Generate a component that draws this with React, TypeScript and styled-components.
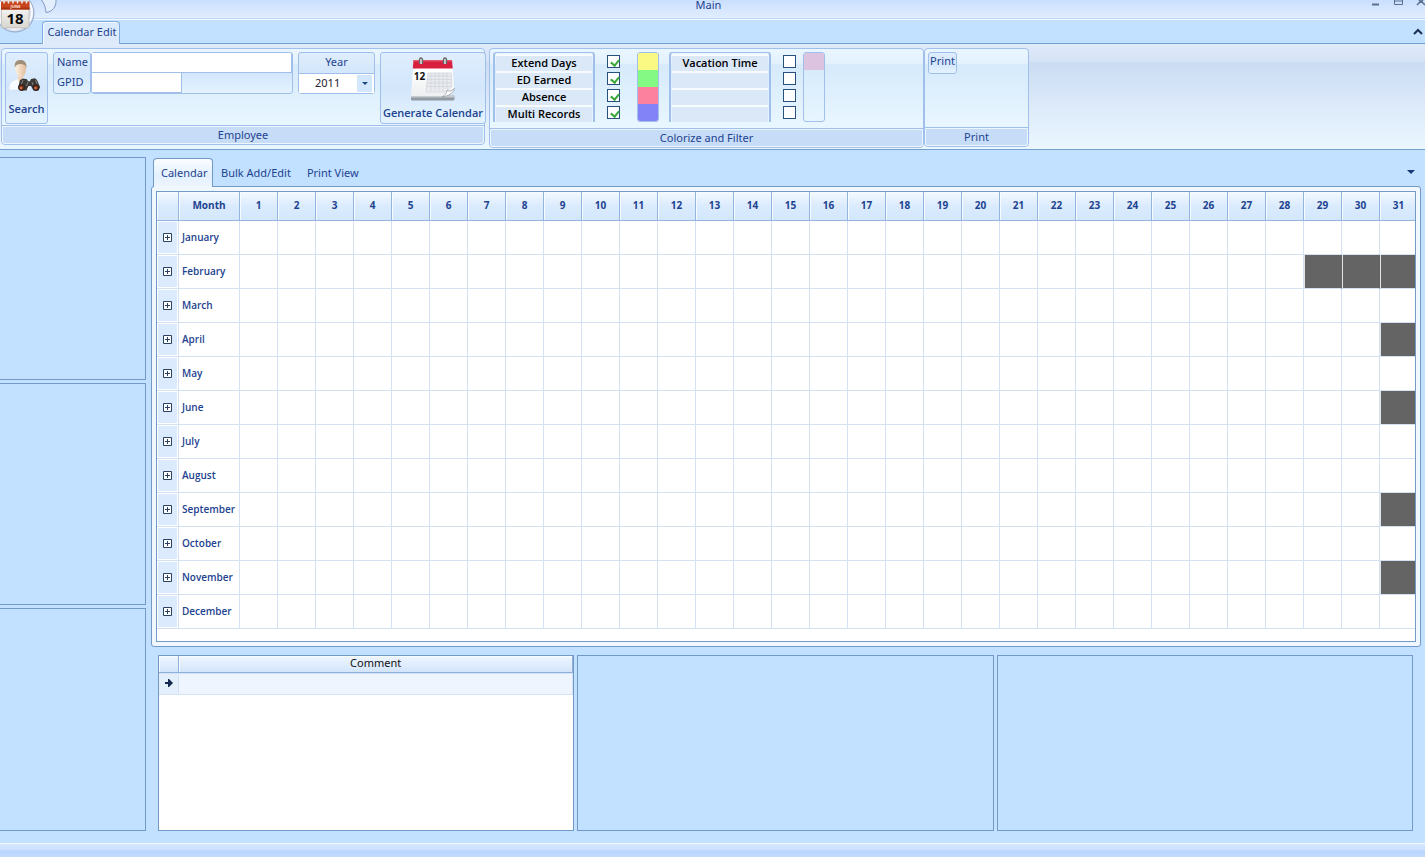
import React from "react";
import styled, { createGlobalStyle, css } from "styled-components";

const ink = "#1d4390";
const line = "#a0bfea";
const edge = "#7399c8";
const sky = "#c2e0ff";
const boldFont = '"Open Sans", "Noto Sans", sans-serif';

const GlobalStyle = createGlobalStyle`
  * { box-sizing: border-box; }
  body {
    margin: 0;
    background: ${sky};
    color: ${ink};
    font: 11px/16px "Noto Sans", "Open Sans", sans-serif;
  }
  button, input, select { font: inherit; color: inherit; margin: 0; }
`;

const Window = styled.div`
  display: flex;
  flex-direction: column;
  min-height: 100vh;
  overflow: hidden;
  background: ${sky};
`;

/* Title bar */
const TitleBar = styled.header`
  position: relative;
  display: flex;
  justify-content: center;
  height: 20px;
  padding-right: 8px;
  background: linear-gradient(#cadffe, #e2eefe);
  border-bottom: 1px solid #f4faff;
  box-shadow: inset 0 -1px 0 #bcd6f5;
`;
const Title = styled.h1`
  margin: 0;
  height: 10px;
  font-size: 11px;
  line-height: 10px;
  font-weight: 400;
`;
const AppButton = styled.button`
  position: absolute;
  z-index: 2;
  left: 0;
  top: 0;
  width: 60px;
  height: 34px;
  padding: 0;
  border: 0;
  background: none;
  svg { display: block; }
`;
const WindowControls = styled.div`
  position: absolute;
  right: 0;
  top: 0;
  display: flex;
`;
const WindowControl = styled.button`
  width: 23px;
  height: 10px;
  padding: 0;
  border: 0;
  background: none;
  &:last-child { width: 10px; }
  svg { display: block; }
`;

/* Ribbon */
const RibbonTabs = styled.div`
  display: flex;
  align-items: flex-end;
  justify-content: space-between;
  height: 24px;
  padding: 0 1px 0 42px;
  border-bottom: 1px solid #6fa0d2;
`;
const RibbonTab = styled.button`
  height: 23px;
  margin-bottom: -1px;
  padding: 0 0 2px 2px;
  border: 1px solid #7fabdf;
  border-bottom: 0;
  border-radius: 4px 4px 0 0;
  box-shadow: inset 1px 1px 0 #f2f9ff;
  width: 78px;
  white-space: nowrap;
  background: linear-gradient(#d8eaff, #dfeafa);
`;
const Collapse = styled.button`
  width: 12px;
  height: 22px;
  padding: 0;
  border: 0;
  background: none;
`;
const Ribbon = styled.section`
  display: flex;
  align-items: flex-start;
  height: 106px;
  padding: 4px 0 0 1px;
  border-bottom: 1px solid #74a0cf;
  background: linear-gradient(#dfeafa 0, #d6e4f6 17px, #cbdcf3 19px, #dceafa 62px, #eaf7ff 105px);
`;
const Group = styled.section<{ $w: number; $body: number; $gap?: number }>`
  display: flex;
  flex-direction: column;
  flex: none;
  width: ${(p) => p.$w}px;
  margin-right: ${(p) => p.$gap ?? 0}px;
  border: 1px solid ${line};
  border-radius: 4px;
  > div { height: ${(p) => p.$body}px; }
`;
const GroupBody = styled.div`
  display: flex;
  align-items: flex-start;
  padding: 3px 0 0 3px;
  border-radius: 4px 4px 0 0;
  background: linear-gradient(#eaf6ff 0, #e4f2fe 14px, #d6eafb 16px, #e8f6ff 76px);
  > * { flex: none; }
`;
const GroupName = styled.h2`
  margin: 0;
  height: 18px;
  border: 1px solid #ecf6ff;
  box-shadow: 0 -1px 0 ${line};
  border-radius: 0 0 3px 3px;
  background: #c7dcf7;
  font-size: 11px;
  line-height: 16px;
  font-weight: 400;
  text-align: center;
`;
const ribbonBox = css`
  border: 1px solid ${line};
  border-radius: 3px;
  background: linear-gradient(#dfeefd, #d3e6fb 50%, #e4f3ff);
`;
const BigButton = styled.button<{ $w: number; $gap?: number; $foot: number }>`
  ${ribbonBox}
  display: flex;
  flex-direction: column;
  align-items: center;
  justify-content: space-between;
  width: ${(p) => p.$w}px;
  height: 72px;
  margin-right: ${(p) => p.$gap ?? 0}px;
  padding: 3px 0 ${(p) => p.$foot}px;
  font-family: ${boldFont};
  font-weight: 600;
  white-space: nowrap;
`;
const FieldLabels = styled.div`
  ${ribbonBox}
  display: grid;
  grid-template-rows: 20px 20px;
  width: 38px;
  height: 42px;
  padding-left: 3px;
  line-height: 18px;
`;
const Fields = styled.div`
  ${ribbonBox}
  width: 202px;
  height: 42px;
  margin-right: 5px;
  display: flex;
  flex-direction: column;
`;
const TextBox = styled.input<{ $w: string }>`
  width: ${(p) => p.$w};
  height: 20px;
  padding: 0 3px;
  border: 0;
  border-right: 1px solid ${line};
  border-bottom: 1px solid ${line};
  background: #fff;
  outline: 0;
`;
const YearBox = styled.div`
  ${ribbonBox}
  display: flex;
  flex-direction: column;
  width: 77px;
  height: 42px;
  margin-right: 5px;
  text-align: center;
  line-height: 18px;
  label { height: 20px; }
`;
const YearPicker = styled.div`
  position: relative;
  height: 20px;
  border-top: 1px solid ${line};
  background: #fff;
  select {
    appearance: none;
    display: block;
    width: 100%;
    height: 18px;
    padding: 0 0 0 16px;
    border: 0;
    background: none;
    color: #23232f;
    outline: 0;
  }
  svg {
    position: absolute;
    right: 2px;
    top: 1px;
    pointer-events: none;
  }
`;
const Legend = styled.div`
  width: 102px;
  height: 70px;
  padding: 1px;
  border: 1px solid ${line};
  border-bottom: 0;
  border-radius: 3px 3px 0 0;
  box-shadow: inset 1px 0 0 ${line}, inset -1px 0 0 ${line};
`;
const LegendName = styled.label`
  display: block;
  height: 17px;
  margin: 0 1px;
  border-top: 2px solid #f7fbff;
  background: #dbe8f8;
  color: #000;
  font-family: ${boldFont};
  font-weight: 600;
  line-height: 14px;
  text-align: center;
`;
const Checks = styled.div<{ $gap: number }>`
  display: grid;
  grid-template-rows: repeat(4, 17px);
  padding: 3px 0 0;
  margin: 0 ${(p) => p.$gap}px 0 12px;
`;
const CheckBox = styled.input`
  appearance: none;
  position: relative;
  width: 13px;
  height: 13px;
  border: 1px solid #28507f;
  background: #fff;
  &:checked::after {
    content: "";
    position: absolute;
    left: 4px;
    top: 2px;
    width: 4px;
    height: 6px;
    border: solid #38a838;
    border-width: 0 2px 2px 0;
    transform: rotate(40deg);
  }
`;
const Swatches = styled.div<{ $gap?: number }>`
  display: grid;
  grid-template-rows: repeat(4, 17px);
  width: 22px;
  height: 70px;
  margin-right: ${(p) => p.$gap ?? 0}px;
  border: 1px solid ${line};
  border-radius: 3px;
  overflow: hidden;
`;
const Swatch = styled.span<{ $c: string }>`
  background: ${(p) => p.$c};
`;
const SmallButton = styled.button`
  ${ribbonBox}
  height: 22px;
  width: 29px;
  padding: 0;
  line-height: 16px;
  display: flex;
  justify-content: center;
`;

/* Work area */
const Work = styled.main`
  display: flex;
  flex: 1;
  padding: 7px 4px 12px 0;
`;
const Side = styled.aside`
  display: flex;
  flex-direction: column;
  gap: 3px;
  width: 146px;
  margin-right: 5px;
`;
const Panel = styled.section<{ $open?: boolean }>`
  flex: 1;
  min-width: 0;
  border: 1px solid ${edge};
  ${(p) => p.$open && "border-left: 0;"}
`;
const Main = styled.div`
  display: flex;
  flex-direction: column;
  flex: 1;
  min-width: 0;
`;
const Tabs = styled.div`
  display: flex;
  align-items: flex-end;
  height: 29px;
  padding: 0 4px 0 2px;
`;
const Tab = styled.button<{ $on?: boolean }>`
  position: relative;
  height: 28px;
  padding: 0 7px;
  border: 1px solid transparent;
  border-bottom: 0;
  border-radius: 4px 4px 0 0;
  background: none;
  white-space: nowrap;
  ${(p) =>
    p.$on &&
    css`
      z-index: 1;
      margin-bottom: -1px;
      height: 29px;
      width: 60px;
      border-color: ${edge};
      background: linear-gradient(#fafdff, #e3f0fe 60%, #eef6ff);
    `}
`;
const TabMenu = styled.button`
  width: 12px;
  height: 28px;
  margin-left: auto;
  padding: 0;
  border: 0;
  background: none;
`;
const Frame = styled.section`
  padding: 4px;
  border: 1px solid ${edge};
  border-radius: 3px;
  background: #f0f7ff;
`;
const GridBox = styled.div`
  height: 451px;
  overflow: hidden;
  border: 1px solid ${edge};
  background: #fff;
`;
const Grid = styled.table`
  width: calc(100% + 3px);
  table-layout: fixed;
  border-collapse: separate;
  border-spacing: 0;
  font-family: ${boldFont};
  font-size: 10px;
  line-height: 14px;
  col:nth-child(1) { width: 22px; }
  col:nth-child(2) { width: 61px; }
`;
const HeadCell = styled.th`
  height: 29px;
  padding: 0 0 2px;
  border-right: 1px solid #95b5de;
  border-bottom: 1px solid #95b5de;
  box-shadow: inset 1px 1px 0 #f6fbff;
  background: linear-gradient(#f3f9ff, #dbebfd 50%, #d3e7fd);
  font-weight: 700;
  text-align: center;
`;
const cellLines = css`
  height: 34px;
  padding: 0;
  border-right: 1px solid #d3e1f3;
  border-bottom: 1px solid #d3e1f3;
`;
const ExpandCell = styled.td`
  ${cellLines}
  background: #dbebfd;
  box-shadow: inset 0 0 0 1px #fff;
  text-align: center;
`;
const Expand = styled.button`
  display: block;
  width: 9px;
  height: 9px;
  margin: 0 auto;
  padding: 0;
  border: 0;
  background: none;
  svg { display: block; }
`;
const MonthCell = styled.th`
  ${cellLines}
  padding: 0 0 2px 3px;
  font-weight: 600;
  text-align: left;
`;
const DayCell = styled.td<{ $off: boolean }>`
  ${cellLines}
  ${(p) =>
    p.$off &&
    css`
      border-right-color: #646464;
      background: #646464;
      box-shadow: inset 1px 0 0 #e4e4e4;
    `}
`;

const Bottom = styled.div`
  display: flex;
  flex: 1;
  gap: 3px;
  min-height: 176px;
  margin: 8px 8px 0 7px;
`;
const CommentPanel = styled(Panel)`
  background: #fff;
`;
const CommentTable = styled.table`
  width: 100%;
  table-layout: fixed;
  border-collapse: separate;
  border-spacing: 0;
  col:first-child { width: 20px; }
  th {
    height: 17px;
    padding: 0 0 2px;
    border-right: 1px solid #8fb0da;
    border-bottom: 1px solid #8fb0da;
    box-shadow: inset 1px 1px 0 #f6fbff;
    background: linear-gradient(#eff6ff, #d3e5fb);
    color: #111;
    font-weight: 400;
    line-height: 14px;
  }
  td {
    height: 22px;
    padding: 0 0 2px;
    border: 1px solid #d3e3f5;
    border-left: 0;
    background: #eef5fe;
  }
  td:first-child { background: #e4effc; text-align: center; }
  td svg { display: block; margin: 0 auto; }
`;
const StatusBar = styled.footer`
  height: 14px;
  border-top: 1px solid #eff8ff;
  background: linear-gradient(#d6e7fe 0, #cbdffd 6px, #b9d5fc 7px, #c2dbfd 13px);
`;

const AppLogo = () => (
  <svg width="60" height="34" viewBox="0 0 60 34">
    <defs>
      <linearGradient id="orb" x1="0" y1="0" x2="1" y2="1">
        <stop offset="0" stopColor="#fff" />
        <stop offset="1" stopColor="#c9d5ea" />
      </linearGradient>
      <linearGradient id="sheet" x1="0" y1="0" x2="0" y2="1">
        <stop offset="0" stopColor="#fff" />
        <stop offset="1" stopColor="#d9d6d0" />
      </linearGradient>
    </defs>
    <circle cx="15" cy="13" r="19" fill="url(#orb)" stroke="#8fa4c6" />
    <circle cx="15" cy="12" r="17" fill="none" stroke="#fff" strokeWidth="1.5" />
    <rect x="1.500" y="1" width="27.500" height="27" rx="1.500" fill="url(#sheet)" stroke="#b1aaa5" strokeWidth=".6" />
    <path d="M1 1.500h28.500V9.500H1z" fill="#c8451e" />
    <path d="M1 7.500h28.500v2H1z" fill="#a93412" />
    <path d="M4 0v3M8.500 0v3M13 0v3M17.500 0v3M22 0v3M26.500 0v3" stroke="#e8e4e2" strokeWidth="1.600" strokeLinecap="round" />
    <text x="15.500" y="8" textAnchor="middle" fontSize="4" fontWeight="700" fill="#ffe9df" fontFamily="Noto Sans, sans-serif">JUNE</text>
    <text x="15" y="24" textAnchor="middle" fontSize="15" fontWeight="700" fill="#0b0b0b" fontFamily="Noto Sans, sans-serif">18</text>
    <path d="M41.500 0c3 3.500 4 8 4.500 12.500C52 12 56.500 7 56 0" fill="#e4effd" stroke="#8099c2" />
  </svg>
);

const SearchPicture = () => (
  <svg width="38" height="37" viewBox="0 0 38 37">
    <defs>
      <linearGradient id="skin" x1="0" y1="0" x2="1" y2="0">
        <stop offset="0" stopColor="#fdf1e2" />
        <stop offset="1" stopColor="#e3bd9c" />
      </linearGradient>
    </defs>
    <path d="M1 34c0-6 2-9 6-10l3-1.500h5l4 2 3 9.500z" fill="#f8fbff" stroke="#d5deea" strokeWidth=".5" />
    <path d="M10 19h5v5l-2.500 3-2.500-3z" fill="#f0d4b8" />
    <path d="M7.300 11c0-4 2-5.500 5-5.500s5.700 1.500 5.700 6c0 5.500-2 10-5 10s-5.700-4.500-5.700-10.500z" fill="url(#skin)" />
    <path d="M6.800 11.500C6 6.500 8.500 4 12.300 4c4 0 6.700 2.500 6.200 8.500-.6-2.500-1.500-4-4.500-4.300-3-.3-6 0-7.200 3.300z" fill="#a08f78" />
    <path d="M12 24l3-1.500 4 .7 1 2h2l1-2.200 4-.7 2 1.700 3 7-1.500 3.500h-5l-2.500-4.500h-2.500l-2 4.500h-5.500L10 32z" fill="#3b3836" />
    <path d="M15 24l-2 5M27.500 24l2 5M20 26l-1.500 4M24 26l1 3" stroke="#8d8883" strokeWidth=".9" />
    <circle cx="13.500" cy="31.500" r="3" fill="#6d2c18" stroke="#222" />
    <circle cx="28" cy="31.500" r="3" fill="#6d2c18" stroke="#222" />
    <circle cx="13" cy="32" r="1.300" fill="#d0714b" />
    <circle cx="27.500" cy="32" r="1.300" fill="#d0714b" />
  </svg>
);

const CalendarPicture = () => (
  <svg width="46" height="46" viewBox="0 0 46 46">
    <defs>
      <linearGradient id="page" x1="0" y1="0" x2="0" y2="1">
        <stop offset="0" stopColor="#fff" />
        <stop offset="1" stopColor="#eeeff1" />
      </linearGradient>
    </defs>
    <path d="M1 40h43.500v3q0 1.500-1.500 1.500H2.500Q1 44.500 1 43z" fill="#939aa4" />
    <path d="M1 39h43.500v2.500H1z" fill="#c6cbd1" />
    <path d="M3 12h39.500L44.500 34l-8 6H1z" fill="url(#page)" />
    <path d="M3.500 4h38.500l.7 8.500H2.800z" fill="#d81f3e" />
    <path d="M3.500 4h38.500v1.500H3.400z" fill="#e4556a" />
    <path d="M18 17h23.500v13.500L35 36H16zM17.500 20H41M17.300 23.500H41M17 27H41M16.500 30.500H41M21 17v18M25 17v18M29 17v18M33 17v18M37 17v16" fill="#e9ebee" stroke="#d0d3d8" strokeWidth=".7" />
    <path d="M32 41c3-1.500 5-4 5-6.500 2.500 1 5 .5 7.500-2-1 4.500-6 7.500-12.500 8.500z" fill="#fdfdfd" stroke="#8e949c" strokeWidth=".7" />
    <path d="M9.500 8V3.500a1.500 1.500 0 013 0V8M33.500 8V3.500a1.500 1.500 0 013 0V8" fill="#d5d5d5" stroke="#696969" strokeWidth="1.300" />
    <text x="9.500" y="23.500" textAnchor="middle" fontSize="10" fontWeight="700" fill="#111" fontFamily="Noto Sans, sans-serif">12</text>
  </svg>
);

const MONTHS = ["January", "February", "March", "April", "May", "June", "July", "August", "September", "October", "November", "December"];
const LENGTHS = [31, 28, 31, 30, 31, 30, 31, 31, 30, 31, 30, 31];
const DAYS = Array.from({ length: 31 }, (_, i) => i + 1);
const RECORD_TYPES = ["Extend Days", "ED Earned", "Absence", "Multi Records"];
const OTHER_TYPES = ["Vacation Time", "", "", ""];

function Filter({ names, checked, id, gap }: { names: string[]; checked: boolean; id: string; gap: number }) {
  return (
    <>
      <Legend>
        {names.map((name, i) => (
          <LegendName key={i} htmlFor={`${id}${i}`}>{name}</LegendName>
        ))}
      </Legend>
      <Checks $gap={gap}>
        {names.map((_, i) => (
          <CheckBox key={i} id={`${id}${i}`} type="checkbox" defaultChecked={checked} />
        ))}
      </Checks>
    </>
  );
}

export default function App() {
  return (
    <Window>
      <GlobalStyle />
      <TitleBar>
        <AppButton aria-label="Application menu"><AppLogo /></AppButton>
        <Title>Main</Title>
        <WindowControls>
          <WindowControl aria-label="Minimize">
            <svg width="23" height="10"><path d="M3 4.500h7" stroke="#5b6f92" strokeWidth="2" /></svg>
          </WindowControl>
          <WindowControl aria-label="Maximize">
            <svg width="23" height="10"><path d="M2.500 0v4.500h8V0M2 1h9" stroke="#5b6f92" fill="none" /></svg>
          </WindowControl>
          <WindowControl aria-label="Close">
            <svg width="10" height="10"><path d="M2 5l4-4 4 4M4 0l2 2 2-2" stroke="#5b6f92" strokeWidth="1.500" fill="none" /></svg>
          </WindowControl>
        </WindowControls>
      </TitleBar>

      <RibbonTabs>
        <RibbonTab>Calendar Edit</RibbonTab>
        <Collapse aria-label="Collapse ribbon">
          <svg width="12" height="8"><path d="M2 6l4-4 4 4" fill="none" stroke="#1c3054" strokeWidth="2" /></svg>
        </Collapse>
      </RibbonTabs>

      <Ribbon>
        <Group $w={484} $body={77} $gap={4}>
          <GroupBody>
            <BigButton $w={43} $gap={5} $foot={6}>
              <SearchPicture />
              <span>Search</span>
            </BigButton>
            <FieldLabels>
              <label htmlFor="name">Name</label>
              <label htmlFor="gpid">GPID</label>
            </FieldLabels>
            <Fields>
              <TextBox id="name" $w="100%" />
              <TextBox id="gpid" $w="90px" />
            </Fields>
            <YearBox>
              <label htmlFor="year">Year</label>
              <YearPicker>
                <select id="year" defaultValue="2011">
                  <option>2011</option>
                </select>
                <svg width="15" height="17">
                  <path d="M0 0h15v17H0z" fill="#d3e7fc" />
                  <path d="M5 7h6l-3 3z" fill="#1b4a80" />
                </svg>
              </YearPicker>
            </YearBox>
            <BigButton $w={106} $foot={2}>
              <CalendarPicture />
              <span>Generate Calendar</span>
            </BigButton>
          </GroupBody>
          <GroupName>Employee</GroupName>
        </Group>

        <Group $w={435} $body={80}>
          <GroupBody>
            <Filter names={RECORD_TYPES} checked id="record" gap={17} />
            <Swatches $gap={10}>
              {["#f9f983", "#84f984", "#fb819f", "#8383f8"].map((c) => <Swatch key={c} $c={c} />)}
            </Swatches>
            <Filter names={OTHER_TYPES} checked={false} id="other" gap={7} />
            <Swatches><Swatch $c="#dcc3df" /></Swatches>
          </GroupBody>
          <GroupName>Colorize and Filter</GroupName>
        </Group>

        <Group $w={105} $body={79}>
          <GroupBody><SmallButton>Print</SmallButton></GroupBody>
          <GroupName>Print</GroupName>
        </Group>
      </Ribbon>

      <Work>
        <Side>
          <Panel $open />
          <Panel $open />
          <Panel $open />
        </Side>
        <Main>
          <Tabs role="tablist">
            <Tab role="tab" aria-selected $on>Calendar</Tab>
            <Tab role="tab">Bulk Add/Edit</Tab>
            <Tab role="tab">Print View</Tab>
            <TabMenu aria-label="Tab list">
              <svg width="12" height="8"><path d="M2 2h8L6 6z" fill="#173a78" /></svg>
            </TabMenu>
          </Tabs>
          <Frame>
            <GridBox>
              <Grid>
                <colgroup><col /><col />{DAYS.map((d) => <col key={d} />)}</colgroup>
                <thead>
                  <tr>
                    <HeadCell />
                    <HeadCell>Month</HeadCell>
                    {DAYS.map((d) => <HeadCell key={d}>{d}</HeadCell>)}
                  </tr>
                </thead>
                <tbody>
                  {MONTHS.map((month, m) => (
                    <tr key={month}>
                      <ExpandCell>
                        <Expand aria-label={`Expand ${month}`}>
                          <svg width="9" height="9"><path d="M.5.5h8v8h-8zM2 4.500h5M4.500 2v5" fill="#fff" stroke="#2b4263" /></svg>
                        </Expand>
                      </ExpandCell>
                      <MonthCell scope="row">{month}</MonthCell>
                      {DAYS.map((d) => <DayCell key={d} $off={d > LENGTHS[m]} />)}
                    </tr>
                  ))}
                </tbody>
              </Grid>
            </GridBox>
          </Frame>
          <Bottom>
            <CommentPanel>
              <CommentTable>
                <colgroup><col /><col /></colgroup>
                <thead><tr><th /><th>Comment</th></tr></thead>
                <tbody>
                  <tr>
                    <td><svg width="8" height="8"><path d="M0 3h3V0h1l4 4-4 4H3V5H0z" fill="#14284f" /></svg></td>
                    <td />
                  </tr>
                </tbody>
              </CommentTable>
            </CommentPanel>
            <Panel />
            <Panel />
          </Bottom>
        </Main>
      </Work>
      <StatusBar />
    </Window>
  );
}
